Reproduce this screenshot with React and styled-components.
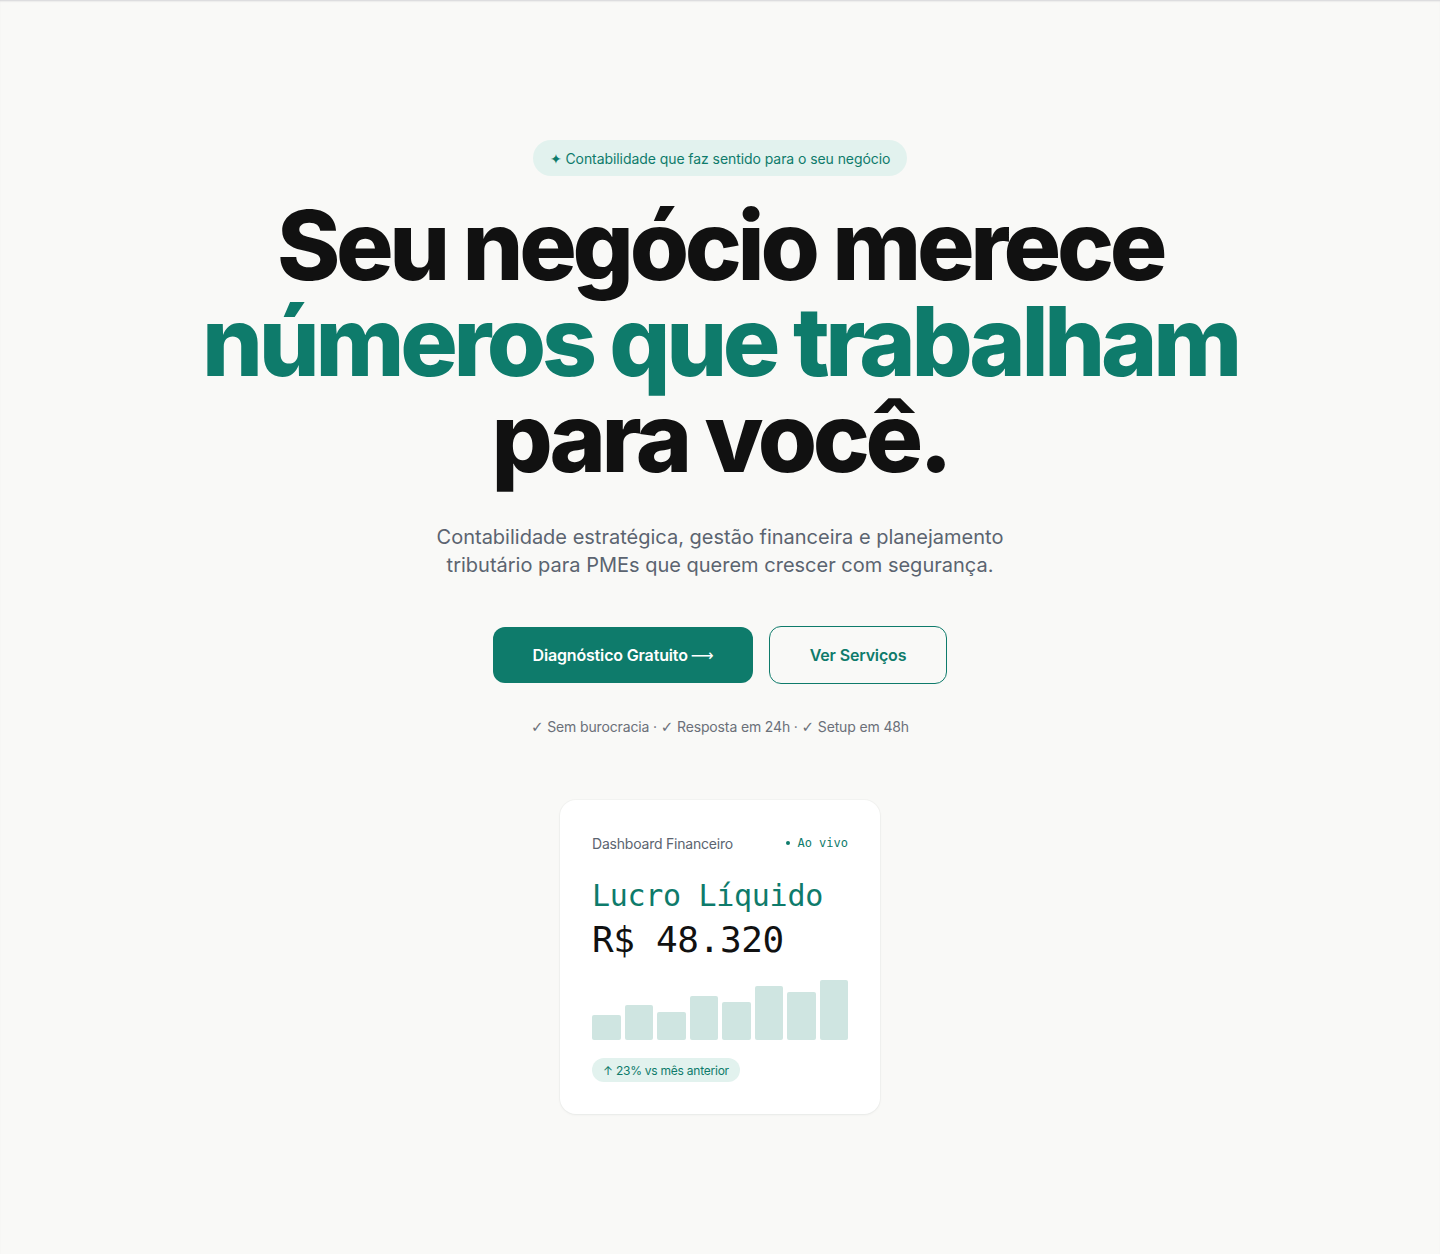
import styled, { createGlobalStyle } from 'styled-components';

const GREEN = '#0e7b6b';
const INK = '#111111';

const GlobalStyle = createGlobalStyle`
  * { box-sizing: border-box; }
  html, body {
    margin: 0;
    padding: 0;
    background: #f9f9f7;
  }
  body {
    font-family: Inter, "Noto Sans", sans-serif;
    color: ${INK};
    -webkit-font-smoothing: antialiased;
  }
`;

const Page = styled.main`
  min-height: 1254px;
  box-shadow: inset 0 2px 2px -1px rgba(40, 40, 60, 0.18);
  display: flex;
  flex-direction: column;
  align-items: center;
  padding-top: 140px;
  padding-bottom: 140px;
`;

const Badge = styled.div`
  display: inline-flex;
  align-items: center;
  gap: 4px;
  height: 36px;
  padding: 0 17px;
  border-radius: 999px;
  background: #e2f2ee;
  color: ${GREEN};
  font-size: 14px;
  letter-spacing: -0.005em;
`;

const Title = styled.h1`
  margin: 21px 0 0;
  font-size: 96px;
  line-height: 96px;
  font-weight: 800;
  letter-spacing: -0.045em;
  text-align: center;
  color: ${INK};
`;

const Line = styled.span`
  display: block;
  color: ${(p) => (p.$accent ? GREEN : 'inherit')};
`;

const Lead = styled.p`
  margin: 38px 0 0;
  max-width: 620px;
  font-size: 20px;
  line-height: 28px;
  color: #5b6470;
  text-align: center;
  letter-spacing: 0;
`;

const Actions = styled.div`
  display: flex;
  align-items: center;
  gap: 16px;
  margin-top: 47px;
`;

const Button = styled.a`
  display: inline-flex;
  align-items: center;
  justify-content: center;
  gap: 3px;
  height: ${(p) => (p.$outline ? '58px' : '56px')};
  width: ${(p) => (p.$outline ? '178px' : '260px')};
  border-radius: 12px;
  font-size: 16px;
  font-weight: 600;
  letter-spacing: -0.01em;
  text-decoration: none;
  cursor: pointer;
  background: ${(p) => (p.$outline ? 'transparent' : GREEN)};
  color: ${(p) => (p.$outline ? GREEN : '#ffffff')};
  border: ${(p) => (p.$outline ? `1px solid ${GREEN}` : 'none')};
`;

const Glyph = styled.span`
  font-family: "DejaVu Sans", sans-serif;
  font-weight: 400;
  font-size: ${(p) => p.$size || 14}px;
`;

const Perks = styled.p`
  margin: 33px 0 0;
  font-size: 14px;
  line-height: 20px;
  color: #6b7079;
  letter-spacing: -0.01em;
`;

const Card = styled.section`
  margin-top: 63px;
  width: 320px;
  background: #ffffff;
  border-radius: 16px;
  padding: 32px;
  box-shadow: 0 1px 3px rgba(20, 30, 30, 0.05), 0 0 0 1px rgba(20, 30, 30, 0.025);
`;

const CardHead = styled.div`
  display: flex;
  align-items: center;
  justify-content: space-between;
  height: 20px;
  margin-top: 1px;
`;

const CardLabel = styled.span`
  font-size: 14px;
  color: #5b6470;
  letter-spacing: -0.015em;
`;

const Live = styled.span`
  display: inline-flex;
  align-items: center;
  gap: 7px;
  font-family: "DejaVu Sans Mono", "Liberation Mono", monospace;
  font-size: 12px;
  color: ${GREEN};
`;

const Dot = styled.span`
  width: 4px;
  height: 4px;
  border-radius: 50%;
  background: ${GREEN};
`;

const Metric = styled.div`
  font-family: "DejaVu Sans Mono", "Liberation Mono", monospace;
  font-size: ${(p) => p.$size}px;
  line-height: ${(p) => p.$line}px;
  color: ${(p) => p.$color};
  letter-spacing: -0.01em;
`;

const MetricTop = styled(Metric)`
  margin-top: 23px;
`;

const Bars = styled.div`
  display: grid;
  grid-template-columns: repeat(8, 1fr);
  gap: 4px;
  align-items: end;
  height: 60px;
  margin-top: 16px;
`;

const Bar = styled.div`
  background: #cfe5e1;
  border-radius: 2px;
`;

const Trend = styled.span`
  display: inline-flex;
  align-items: center;
  gap: 2px;
  margin-top: 18px;
  height: 24px;
  padding: 0 11px 0 11px;
  border-radius: 999px;
  background: #e2f2ee;
  color: ${GREEN};
  font-size: 12px;
  letter-spacing: -0.02em;
`;

const bars = [42, 58, 47, 73, 63, 90, 80, 100];

export default function App() {
  return (
    <>
      <GlobalStyle />
      <Page>
        <Badge>✦ Contabilidade que faz sentido para o seu negócio</Badge>
        <Title>
          <Line>Seu negócio merece</Line>
          <Line $accent>números que trabalham</Line>
          <Line>para você.</Line>
        </Title>
        <Lead>
          Contabilidade estratégica, gestão financeira e planejamento
          <br />
          tributário para PMEs que querem crescer com segurança.
        </Lead>
        <Actions>
          <Button href="#diagnostico">
            Diagnóstico Gratuito <Glyph $size={16}>⟶</Glyph>
          </Button>
          <Button href="#servicos" $outline>
            Ver Serviços
          </Button>
        </Actions>
        <Perks>
          <Glyph $size={15}>✓</Glyph> Sem burocracia · <Glyph $size={15}>✓</Glyph> Resposta em 24h ·{' '}
          <Glyph $size={15}>✓</Glyph> Setup em 48h
        </Perks>
        <Card>
          <CardHead>
            <CardLabel>Dashboard Financeiro</CardLabel>
            <Live>
              <Dot />
              Ao vivo
            </Live>
          </CardHead>
          <MetricTop $size={30} $line={40} $color={GREEN}>
            Lucro Líquido
          </MetricTop>
          <Metric $size={36} $line={48} $color={INK}>
            R$ 48.320
          </Metric>
          <Bars>
            {bars.map((h, i) => (
              <Bar key={i} style={{ height: `${h}%` }} />
            ))}
          </Bars>
          <Trend>↑ 23% vs mês anterior</Trend>
        </Card>
      </Page>
    </>
  );
}
